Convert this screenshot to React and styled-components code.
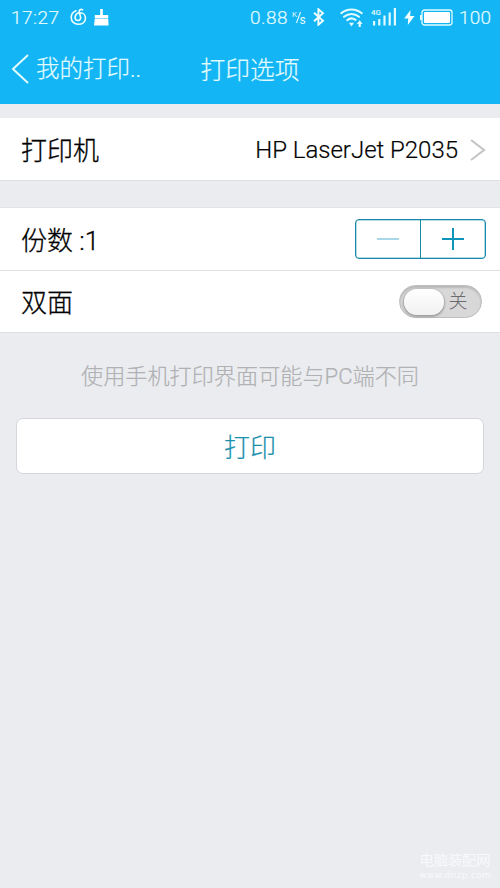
import React, { useState } from "react";
import styled, { createGlobalStyle } from "styled-components";

const GlobalStyle = createGlobalStyle`
  * {
    box-sizing: border-box;
  }
  body {
    margin: 0;
    background: #ebecf0;
    font-family: Roboto, "Noto Sans CJK SC", sans-serif;
    font-weight: 300;
  }
  button {
    font: inherit;
    padding: 0;
    cursor: pointer;
  }
`;

const Page = styled.div`
  display: flex;
  flex-direction: column;
  width: 500px;
  height: 888px;
  overflow: hidden;
  background: #ebecf0;
`;

const Header = styled.header`
  height: 104px;
  background: #13b5f4;
  color: #e2fbff;
`;

const StatusBar = styled.div`
  display: flex;
  align-items: center;
  height: 34px;
  padding: 0 8px 0 11px;
  font-size: 19px;
  line-height: 36px;
  -webkit-text-stroke: 0.2px;
  svg {
    display: block;
    flex: none;
  }
`;

const Clock = styled.span`
  width: 59px;
  padding-top: 1px;
  letter-spacing: 0.5px;
`;

const AppIcons = styled.div`
  display: flex;
  align-items: center;
  gap: 6px;
`;

const StatusIcons = styled.div`
  display: flex;
  align-items: center;
  margin-left: auto;
`;

const IconSlot = styled.span`
  margin-left: ${(props) => props.$gap}px;
`;

const Speed = styled.span`
  width: 41px;
  padding-top: 1px;
  letter-spacing: 0.5px;
`;

const Percent = styled.span`
  width: 33px;
  margin-left: 6px;
  padding-top: 1px;
  letter-spacing: 0.2px;
`;

const NavBar = styled.nav`
  display: grid;
  grid-template-columns: 150px 200px 150px;
  height: 70px;
  align-items: center;
`;

const Back = styled.button`
  display: flex;
  align-items: center;
  height: 70px;
  padding-left: 11px;
  border: 0;
  background: none;
  color: inherit;
  font-size: 23.5px;
  line-height: 34px;
  white-space: nowrap;
  -webkit-text-stroke: 0.2px;
  svg {
    margin-right: 7px;
  }
`;

const Title = styled.h1`
  margin: 0;
  padding-top: 4px;
  text-align: center;
  font-size: 24.8px;
  font-weight: 300;
  line-height: 66px;
  -webkit-text-stroke: 0.2px;
`;

const Group = styled.section`
  margin-top: ${(props) => props.$gap}px;
  border-top: 1px solid ${(props) => (props.$first ? "#fff" : "#e3e4e7")};
  background: #fff;
`;

const Row = styled.div`
  display: flex;
  align-items: center;
  justify-content: space-between;
  height: ${(props) => props.$height || 62}px;
  padding-left: 21px;
  padding-right: ${(props) => props.$right || 14}px;
  border-bottom: 1px solid #dfe0e3;
`;

const Label = styled.span`
  padding-top: 3px;
  color: #000;
  font-size: 26px;
  font-weight: 300;
  line-height: 36px;
  -webkit-text-stroke: 0.3px;
`;

const Value = styled.span`
  display: flex;
  align-items: center;
  color: #000;
  font-size: 24px;
  font-weight: 300;
  letter-spacing: -0.02px;
  -webkit-text-stroke: 0.2px;
  svg {
    margin-left: 12px;
  }
`;

const Stepper = styled.div`
  display: flex;
  width: 131px;
  height: 40px;
  border: 1px solid #1789a8;
  border-radius: 4px;
  box-shadow: inset 0 0 0 0.5px #6fb9cc;
  overflow: hidden;
`;

const StepButton = styled.button`
  display: flex;
  flex: 1;
  align-items: center;
  justify-content: center;
  border: 0;
  background: transparent;
  color: ${(props) => (props.disabled ? "#a9d8e8" : "#1093b9")};
  & + & {
    border-left: 1px solid #1789a8;
  }
`;

const Switch = styled.button`
  display: flex;
  align-items: center;
  flex-direction: ${(props) => (props.$on ? "row-reverse" : "row")};
  width: 83px;
  height: 33px;
  padding: 0 4px;
  border: 1px solid #bdbdbd;
  border-radius: 17px;
  background: ${(props) => (props.$on ? "#13b5f4" : "#d8d8d8")};
  box-shadow: inset 0 2px 2px #b9b9b9;
`;

const Knob = styled.span`
  width: 40px;
  height: 26px;
  border-radius: 13px;
  background: linear-gradient(#fff, #f1f1f1);
  box-shadow: 0 1px 2px 1px #a0a0a0;
`;

const SwitchText = styled.span`
  flex: 1;
  padding-right: 5px;
  text-align: center;
  color: #696b70;
  font-size: 19px;
  line-height: 30px;
`;

const Hint = styled.p`
  margin: 28px 0 26px;
  text-align: center;
  color: #b0b1b3;
  font-size: 22.15px;
  line-height: 31px;
  -webkit-text-stroke: 0.2px;
`;

const PrintButton = styled.button`
  height: 56px;
  margin: 0 16px;
  padding-bottom: 2px;
  border: 1px solid #d5d6dc;
  border-radius: 7px;
  background: #fff;
  color: #198fac;
  font-size: 26px;
  -webkit-text-stroke: 0.2px;
`;

const Watermark = styled.footer`
  display: flex;
  flex-direction: column;
  align-items: center;
  width: 72px;
  margin: auto 9px 6px auto;
  color: #f8f9fb;
  font-size: 14.2px;
  font-weight: 400;
  line-height: 17px;
  white-space: nowrap;
  small {
    font-family: "DejaVu Sans", sans-serif;
    font-size: 9px;
    line-height: 13px;
    letter-spacing: 0.3px;
  }
`;

const MusicIcon = () => (
  <svg width="18" height="18" viewBox="0 0 18 18" fill="none" stroke="#f3ffff" strokeWidth="1.6" strokeLinecap="round">
    <path d="M6 2.8C3.1 3.9 1.2 6.4 1.2 9.6c0 4 3.1 6.7 7 6.7 4.3 0 7.3-2.6 7.3-6.3 0-3.1-2.5-5.2-5.4-5.2-3.1 0-5 1.9-5 4.4 0 2 1.2 3.3 2.9 3.3 1.8 0 2.9-1.4 2.6-3.1L9.3 4c-.4-2 1.2-3.3 3.3-2.2" />
  </svg>
);

const BroomIcon = () => (
  <svg width="15" height="17" viewBox="0 0 15 17" fill="#fff">
    <path d="M6.2 0h2.6v6h5.4v3H.8V6h5.4zM.8 9.6h13.4l.4 6.9H0z" />
  </svg>
);

const SpeedUnit = () => (
  <svg width="16" height="17" viewBox="0 0 16 17" fill="none" stroke="currentColor">
    <path d="M9.5 3L5.5 14" strokeWidth="1.1" />
    <text x="1" y="7.5" fill="currentColor" stroke="none" fontSize="8" fontWeight="400">K</text>
    <text x="8.5" y="14.5" fill="currentColor" stroke="none" fontSize="12" fontWeight="400">s</text>
  </svg>
);

const BluetoothIcon = () => (
  <svg width="12" height="18" viewBox="0 0 12 18" fill="none" stroke="#f3ffff" strokeWidth="1.9">
    <path d="M1 4.8l9 8-4.6 4V1.2l4.6 4-9 8" />
  </svg>
);

const WifiIcon = () => (
  <svg width="23" height="19" viewBox="0 0 23 19" fill="none" stroke="currentColor" strokeWidth="2" strokeLinecap="round">
    <path d="M1.2 5.2c6-5 14.6-5 20.6 0M4 8.8c4.5-3.9 10.5-3.9 15 0M7.2 12.2c2.4-2.1 5.6-2.3 8.3-.3" />
    <path d="M9 14.8h5L11.5 18.4zM16.8 16l2.9-3.8 2.9 3.8h-1.8V19h-2.2v-3z" fill="currentColor" stroke="none" />
  </svg>
);

const SignalIcon = () => (
  <svg width="27" height="18" viewBox="0 0 27 18" fill="currentColor">
    <text x="0" y="6.5" fontSize="8" fontWeight="500" stroke="none">4G</text>
    <path d="M2 13h2.2v4.5H2zM7.2 11h2.2v6.5H7.2zM12.4 7.5h2.2v10h-2.2zM17.6 4.5h2.2v13h-2.2zM22.8 0H25v17.5h-2.2z" />
  </svg>
);

const BoltIcon = () => (
  <svg width="11" height="15" viewBox="0 0 11 15" fill="#f3ffff">
    <path d="M6.5 0L.2 8.5h4L3.8 15l6.8-9H6.2z" />
  </svg>
);

const BatteryIcon = () => (
  <svg width="33" height="17" viewBox="0 0 33 17">
    <rect x="2" y="1" width="30" height="15" rx="2.5" fill="none" stroke="currentColor" strokeWidth="1.3" />
    <rect x="4" y="3" width="26" height="11" rx="1" fill="#fff" />
    <path d="M0 6h2v5H0z" fill="currentColor" />
  </svg>
);

const App = () => {
  const [count, setCount] = useState(1);
  const [duplex, setDuplex] = useState(false);

  return (
    <Page>
      <GlobalStyle />
      <Header>
        <StatusBar>
          <Clock>17:27</Clock>
          <AppIcons>
            <MusicIcon />
            <BroomIcon />
          </AppIcons>
          <StatusIcons>
            <Speed>0.88</Speed>
            <SpeedUnit />
            <IconSlot $gap={6}><BluetoothIcon /></IconSlot>
            <IconSlot $gap={15}><WifiIcon /></IconSlot>
            <IconSlot $gap={8}><SignalIcon /></IconSlot>
            <IconSlot $gap={6}><BoltIcon /></IconSlot>
            <IconSlot $gap={5}><BatteryIcon /></IconSlot>
            <Percent>100</Percent>
          </StatusIcons>
        </StatusBar>
        <NavBar>
          <Back>
            <svg width="18" height="30" viewBox="0 0 18 30" fill="none" stroke="currentColor" strokeWidth="2">
              <path d="M17 1L2 15l15 14" />
            </svg>
            我的打印..
          </Back>
          <Title>打印选项</Title>
        </NavBar>
      </Header>

      <Group $gap={14} $first>
        <Row>
          <Label>打印机</Label>
          <Value>
            HP LaserJet P2035
            <svg width="16" height="22" viewBox="0 0 16 22" fill="none" stroke="#c5c5c5" strokeWidth="2.2">
              <path d="M1 1l13 10L1 21" />
            </svg>
          </Value>
        </Row>
      </Group>

      <Group $gap={26}>
        <Row $height={63}>
          <Label>份数 :{count}</Label>
          <Stepper>
            <StepButton disabled={count === 1} onClick={() => setCount(count - 1)}>
              <svg width="22" height="22" stroke="currentColor" strokeWidth="2">
                <path d="M0 11h22" />
              </svg>
            </StepButton>
            <StepButton onClick={() => setCount(count + 1)}>
              <svg width="22" height="22" stroke="currentColor" strokeWidth="2">
                <path d="M0 11h22M11 0v22" />
              </svg>
            </StepButton>
          </Stepper>
        </Row>
        <Row $right={18}>
          <Label>双面</Label>
          <Switch $on={duplex} onClick={() => setDuplex(!duplex)}>
            <Knob />
            <SwitchText>{duplex ? "开" : "关"}</SwitchText>
          </Switch>
        </Row>
      </Group>

      <Hint>使用手机打印界面可能与PC端不同</Hint>
      <PrintButton>打印</PrintButton>

      <Watermark>
        电脑装配网
        <small>www.dnzp.com</small>
      </Watermark>
    </Page>
  );
};

export default App;
